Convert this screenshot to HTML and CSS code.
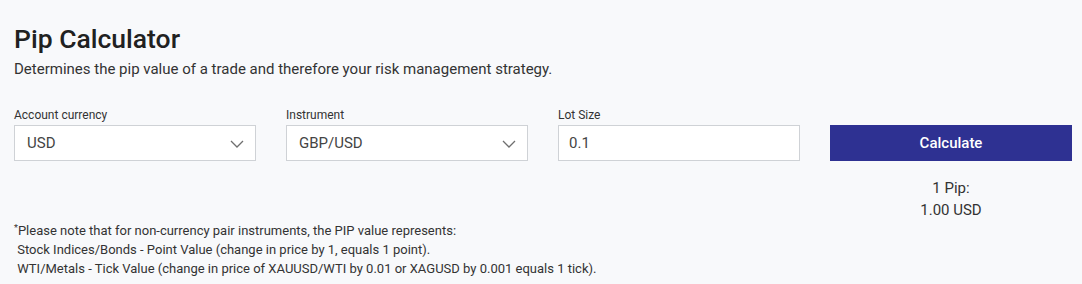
FILE: index.html
```html
<!DOCTYPE html>
<html lang="en">
<head>
<meta charset="UTF-8">
<meta name="viewport" content="width=device-width, initial-scale=1.0">
<title>Pip Calculator</title>
<link rel="stylesheet" href="styles.css">
</head>
<body>

<div class="calc">
    <h1>Pip Calculator</h1>
    <p class="lead">Determines the pip value of a trade and therefore your risk management strategy.</p>

    <div class="form">
        <div class="field">
            <label for="currency">Account currency</label>
            <div class="select-wrap">
                <select id="currency">
                    <option>USD</option>
                    <option>EUR</option>
                    <option>GBP</option>
                </select>
                <svg class="chevron" width="14" height="8" viewBox="0 0 14 8"><polyline points="1,1 7,7 13,1" fill="none" stroke="#6f6f6f" stroke-width="1.3"/></svg>
            </div>
        </div>
        <div class="field">
            <label for="instrument">Instrument</label>
            <div class="select-wrap">
                <select id="instrument">
                    <option>GBP/USD</option>
                    <option>EUR/USD</option>
                    <option>USD/JPY</option>
                </select>
                <svg class="chevron" width="14" height="8" viewBox="0 0 14 8"><polyline points="1,1 7,7 13,1" fill="none" stroke="#6f6f6f" stroke-width="1.3"/></svg>
            </div>
        </div>
        <div class="field">
            <label for="lot">Lot Size</label>
            <input type="text" id="lot" value="0.1">
        </div>
        <div class="field">
            <span class="spacer">&nbsp;</span>
            <button type="button">Calculate</button>
        </div>
        <div class="result">
            1 Pip:<br>
            1.00 USD
        </div>
    </div>

    <div class="note">
        <div><sup>*</sup>Please note that for non-currency pair instruments, the PIP value represents:</div>
        <div>&nbsp;Stock Indices/Bonds - Point Value (change in price by 1, equals 1 point).</div>
        <div>&nbsp;WTI/Metals - Tick Value (change in price of XAUUSD/WTI by 0.01 or XAGUSD by 0.001 equals 1 tick).</div>
    </div>
</div>

</body>
</html>
```

FILE: styles.css
```css
* { box-sizing: border-box; }
body {
    margin: 0;
    background-color: #f8f9fb;
    color: #333;
    font-family: Roboto, "Liberation Sans", Arial, sans-serif;
}
.calc {
    padding: 23px 10px 0 14px;
}
h1 {
    margin: 0;
    font-size: 26.5px;
    line-height: 31px;
    font-weight: 500;
    color: #212121;
}
.lead {
    margin: 5px 0 0;
    font-size: 15px;
    line-height: 20px;
    color: #333;
}
.form {
    margin-top: 28px;
    display: grid;
    grid-template-columns: repeat(4, 1fr);
    column-gap: 30px;
}
.field {
    display: flex;
    flex-direction: column;
}
label, .spacer {
    font-size: 12px;
    line-height: 16px;
    margin-bottom: 2px;
    color: #333;
}
.select-wrap {
    position: relative;
}
select, input {
    width: 100%;
    height: 36px;
    margin: 0;
    padding: 0 12px;
    border: 1px solid #cfd2d6;
    border-radius: 0;
    background: white;
    font-family: inherit;
    font-size: 15px;
    color: #444;
    outline: none;
}
select {
    appearance: none;
    -webkit-appearance: none;
}
input {
    padding-left: 10px;
}
.chevron {
    position: absolute;
    right: 12px;
    top: 15px;
    pointer-events: none;
}
button {
    height: 36px;
    border: none;
    background-color: #2e3192;
    color: white;
    font-family: inherit;
    font-size: 15px;
    font-weight: 500;
    cursor: pointer;
}
.result {
    grid-column: 4;
    margin-top: 16px;
    text-align: center;
    font-size: 15px;
    line-height: 22px;
    color: #333;
}
.note {
    font-size: 13px;
    line-height: 19px;
    color: #333;
}
.note sup {
    font-size: 9px;
    line-height: 0;
    vertical-align: 4px;
}
```
